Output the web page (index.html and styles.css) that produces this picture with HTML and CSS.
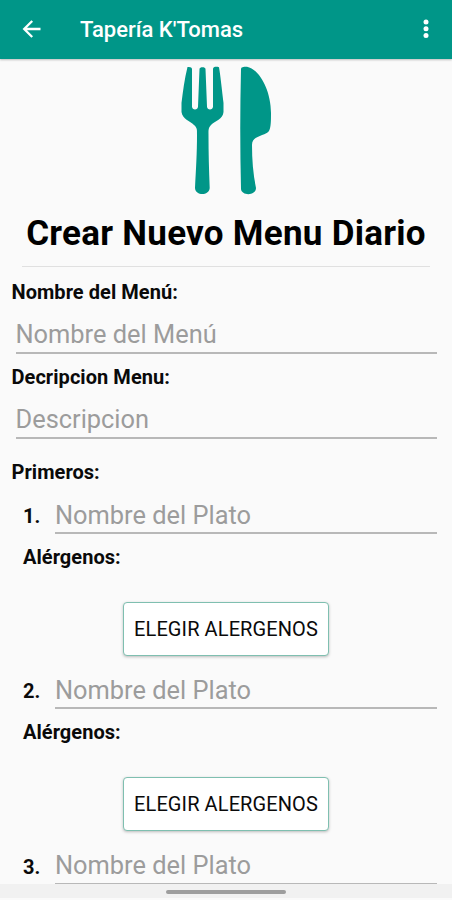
FILE: index.html
```
<!DOCTYPE html>
<html lang="es">

<head>
    <meta charset="UTF-8">
    <title>Tapería K'Tomas</title>
    <link rel="stylesheet" href="styles.css">
</head>

<body>
    <header class="toolbar">
        <svg class="back" viewBox="0 0 20 20" width="20" height="20">
            <path d="M18.5 10H2.5M10.2 2L2.2 10l8 8" />
        </svg>
        <span class="title">Tapería K'Tomas</span>
        <svg class="more" viewBox="0 0 6 20" width="6" height="20">
            <circle cx="3" cy="3" r="2.5" />
            <circle cx="3" cy="9.8" r="2.5" />
            <circle cx="3" cy="16.4" r="2.5" />
        </svg>
    </header>

    <main class="content">
        <svg class="logo" viewBox="0 0 92 130" width="92" height="130">
            <!-- tenedor -->
            <path d="M7.5 1C10 .6 12 1.200 12 3V40.500C12 44.500 18 44.500 18 40.500L19.500 3C19.500 .5 25.500 .5 25.500 3L27 40.500C27 44.500 33 44.500 33 40.500V3C33 .8 36 .5 39 1.200C40.500 10 42 25 43.500 37V46C43 53 35 55 31 59C28 62 28.500 65 28.500 69C28.500 87 29 103 29.700 122C29 130 15.500 130 15 122C16 103 17 87 17 69C17 64 17.500 62 14 59C10 55 2.500 53 1.500 46V37C3 25 4.500 13 7.500 1Z" />
            <!-- cuchillo -->
            <path d="M61 3C61 1 63 .7 67 .7C79 3 91 24 91 47C91 55 91 61 89 65C86 70 72 69 72 79C72 93 73 108 76 122C76 130 61.500 130 61 123C60 83 60 43 61 3Z" />
        </svg>
        <h1>Crear Nuevo Menu Diario</h1>

        <form>
            <div class="field">
                <label for="nombre">Nombre del Menú:</label>
                <input type="text" id="nombre" placeholder="Nombre del Menú">
            </div>
            <div class="field">
                <label for="descripcion">Decripcion Menu:</label>
                <input type="text" id="descripcion" placeholder="Descripcion">
            </div>

            <h2>Primeros:</h2>
            <div class="plato">
                <div class="fila">
                    <span class="num">1.</span>
                    <input type="text" placeholder="Nombre del Plato">
                </div>
                <p>Alérgenos:</p>
                <button type="button">ELEGIR ALERGENOS</button>
            </div>
            <div class="plato">
                <div class="fila">
                    <span class="num">2.</span>
                    <input type="text" placeholder="Nombre del Plato">
                </div>
                <p>Alérgenos:</p>
                <button type="button">ELEGIR ALERGENOS</button>
            </div>
            <div class="plato">
                <div class="fila">
                    <span class="num">3.</span>
                    <input type="text" placeholder="Nombre del Plato">
                </div>
            </div>
        </form>
    </main>

    <footer class="navbar">
        <div class="pill"></div>
    </footer>
</body>

</html>
```
FILE: styles.css
```
* {
    margin: 0;
    padding: 0;
    box-sizing: border-box;
}

body {
    display: flex;
    flex-direction: column;
    height: 900px;
    overflow: hidden;
    background: #fafafa;
    color: #0a0a0a;
    font-family: Roboto, "Liberation Sans", sans-serif;
}

.toolbar {
    display: flex;
    align-items: center;
    flex: none;
    height: 59px;
    padding: 0 23px 2px 22px;
    background: #009688;
    box-shadow: 0 1px 2px rgba(0, 0, 0, 0.25);
}

.back {
    fill: none;
    stroke: #fff;
    stroke-width: 2.3;
}

.title {
    flex: 1;
    margin-left: 38px;
    padding-top: 2px;
    color: #fff;
    font-size: 22px;
    font-weight: 500;
    line-height: 28px;
}

.more {
    fill: #fff;
}

.content {
    flex: 1;
    min-height: 0;
    overflow: hidden;
}

.logo {
    display: block;
    margin: 7px auto 0;
    fill: #009688;
}

h1 {
    height: 71px;
    margin: 0 22px;
    padding-top: 17px;
    border-bottom: 1px solid #e0e0e0;
    color: #000;
    font-size: 35px;
    font-weight: 700;
    letter-spacing: 0.27px;
    line-height: 42px;
    text-align: center;
    white-space: nowrap;
}

form {
    padding: 13px 15px 0 11.5px;
}

.field {
    height: 84.5px;
}

label,
h2,
.num,
p {
    display: block;
    font-size: 20px;
    font-weight: 700;
    letter-spacing: 0.05px;
    line-height: 24px;
}

input {
    display: block;
    width: 100%;
    border: none;
    border-bottom: 2px solid #b8b8b8;
    outline: none;
    background: none;
    color: #0a0a0a;
    font-family: inherit;
    font-size: 25.4px;
}

input::placeholder {
    color: #9c9c9c;
    opacity: 1;
}

.field input {
    width: 421px;
    height: 50px;
    margin-left: 4px;
    padding-top: 12px;
}

h2 {
    margin-top: 11px;
}

.plato {
    height: 175.3px;
    padding-left: 11.5px;
}

.fila {
    display: flex;
    height: 50px;
}

.num {
    width: 32px;
    padding-top: 20px;
}

.fila input {
    flex: 1;
    min-width: 0;
    padding-top: 13px;
}

p {
    margin-top: 11px;
}

button {
    display: block;
    width: 206px;
    height: 54px;
    margin: 33px 0 0 100px;
    border: 1px solid #7fbfb0;
    border-radius: 4px;
    background: #fff;
    box-shadow: 0 1px 3px rgba(0, 0, 0, 0.25);
    color: #0a0a0a;
    font-family: inherit;
    font-size: 20px;
    letter-spacing: 0.1px;
    white-space: nowrap;
}

.navbar {
    flex: none;
    height: 16px;
    padding-top: 6px;
    border-bottom: 2px solid #fafafa;
    background: #f1f1f1;
}

.pill {
    width: 120px;
    height: 4px;
    margin: 0 auto;
    border-radius: 2px;
    background: #9e9e9e;
}
```
